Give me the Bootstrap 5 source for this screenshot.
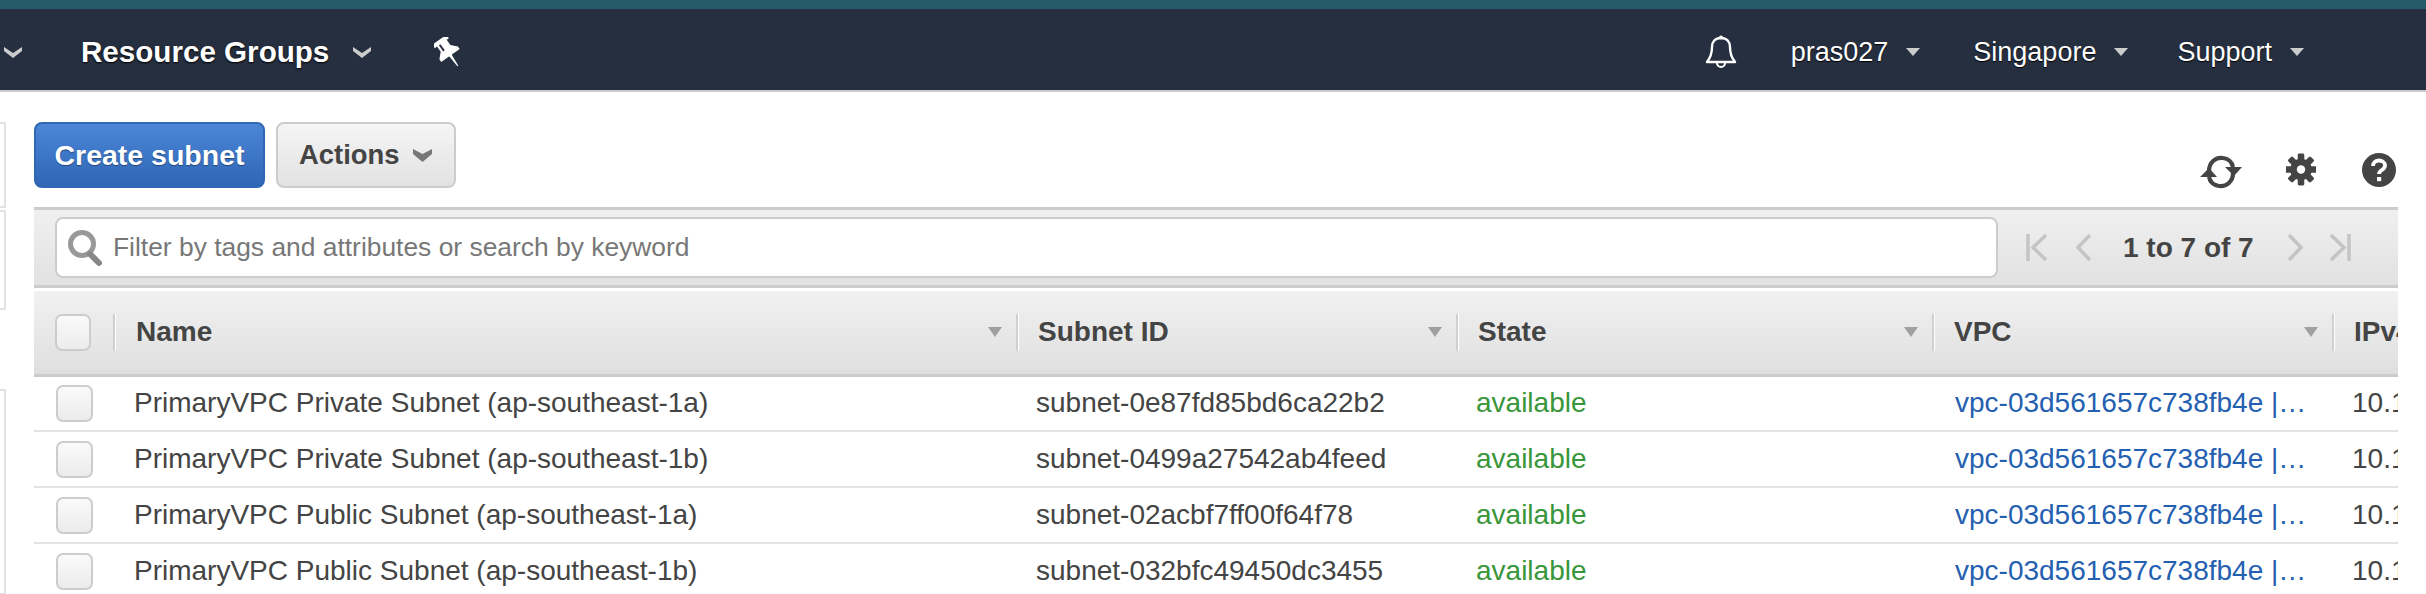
<!DOCTYPE html>
<html lang="en">
<head>
  <meta charset="UTF-8" />
  <meta name="viewport" content="width=device-width, initial-scale=1" />
  <title>Subnets</title>
  <link href="https://cdn.jsdelivr.net/npm/bootstrap@5.3.3/dist/css/bootstrap.min.css" rel="stylesheet" />
  <style>
    html, body {
      height: 594px;
      overflow: hidden;
    }

    body {
      font-family: "Liberation Sans", Arial, sans-serif;
      font-size: 28px;
      color: #444;
      background: #fff;
    }

    /* top bars */
    .top-strip {
      height: 9px;
      background: #265b6b;
    }

    .top-bar {
      height: 83px;
      padding: 4px 0 0;
      background: #262f3f;
      border-bottom: 2px solid #ccc;
      color: #fff;
      flex-wrap: nowrap;
      justify-content: flex-start;
    }

    .nav-bold {
      font-size: 29.600px;
      font-weight: 700;
      text-shadow: 0 1px 2px #000;
      margin-left: 59px;
      padding-top: 2px;
    }

    .nav-plain {
      font-size: 27px;
      text-shadow: 0 1px 1px #000;
      padding-top: 2px;
    }

    .nav-caret {
      width: 0;
      height: 0;
      border-left: 7px solid transparent;
      border-right: 7px solid transparent;
      border-top: 8px solid #ccc;
      margin-left: 18px;
    }

    .spacer-auto {
      margin-left: auto;
    }

    /* stub of the collapsed side panel */
    .side-stub {
      width: 34px;
      flex: none;
    }

    .stub-box {
      width: 6px;
      border: 2px solid #e2e2e2;
      border-left: 0;
    }

    .page-main {
      width: 2364px;
      height: 502px;
      overflow: hidden;
      flex: none;
    }

    .tool-row {
      height: 115px;
      padding-top: 30px;
    }

    .btn-create, .btn-actions {
      height: 66px;
      font-weight: 700;
      border-radius: 8px;
      padding: 0 22px 0 21px;
      line-height: 1;
    }

    .btn-create {
      width: 231px;
      padding: 0;
      font-size: 28.500px;
      color: #fff;
      background: linear-gradient(#4c86d6, #2f66b6);
      border: 2px solid #2f67b3;
      text-shadow: 0 1px 1px rgba(0, 0, 0, .4);
    }

    .btn-actions {
      width: 180px;
      margin-left: 11px;
      font-size: 27.400px;
      color: #444;
      background: linear-gradient(#f5f5f5, #e2e2e2);
      border: 2px solid #ccc;
    }

    .tool-icons {
      height: 68px;
      padding-right: 2px;
    }

    /* filter band */
    .filter-band {
      height: 81px;
      padding: 0 0 0 21px;
      background: linear-gradient(#f0f0f0, #e1e1e1);
      border-top: 3px solid #ccc;
      border-bottom: 3px solid #ccc;
    }

    .filter-box {
      width: 1943px;
      height: 61px;
      background: #fff;
      border: 2px solid #ccc;
      border-radius: 8px;
      padding-left: 10px;
      font-size: 26.400px;
      color: #777;
      flex: none;
    }

    .filter-text {
      margin-left: 10px;
    }

    .pager-count {
      font-weight: 700;
      color: #444;
      white-space: nowrap;
    }

    /* subnet table */
    .table-clip {
      margin-top: 3px;
      overflow: hidden;
    }

    .subnet-table {
      table-layout: fixed;
      width: 2598px;
      margin: 0;
      color: #444;
    }

    .subnet-table th {
      height: 84px;
      padding: 0;
      background: linear-gradient(#f1f1f1, #dfdfdf);
      border-bottom: 3px solid #ccc;
      font-weight: 700;
      vertical-align: middle;
    }

    .subnet-table td {
      height: 56px;
      padding: 0 22px 0 20px;
      border-bottom: 2px solid #e4e4e4;
      font-weight: 400;
      vertical-align: middle;
      white-space: nowrap;
      overflow: hidden;
    }

    .subnet-table td.check-cell {
      padding: 0 0 0 22px;
    }

    .subnet-table td.name-cell {
      padding-left: 21px;
    }

    .subnet-table td.vpc-cell {
      padding: 0 24px 0 23px;
    }

    .head-cell {
      height: 37px;
      padding: 0 14px 0 20px;
      border-left: 2px solid #d0d0d0;
      box-shadow: inset 1px 0 0 #fff;
    }

    .head-cell.head-name {
      padding-left: 21px;
    }

    .sort-tri {
      width: 0;
      height: 0;
      border-left: 7px solid transparent;
      border-right: 7px solid transparent;
      border-top: 10px solid #a0a0a0;
    }

    .row-check {
      width: 37px;
      height: 37px;
      margin: 0;
      float: none;
      background-image: linear-gradient(#fafafa, #ececec);
      border: 2px solid #ccc;
      border-radius: 8px;
    }

    .head-check {
      margin-left: 21px;
      width: 36px;
    }

    .state-ok {
      color: #3a963a;
    }

    .vpc-link {
      color: #2560b0;
      text-decoration: none;
    }
  </style>
</head>
<body>

  <div class="top-strip"></div>
  <nav class="navbar top-bar">
    <svg width="18" height="12" viewBox="0 0 18 12" class="ms-1" aria-hidden="true"><path d="M0 1l9 6 9-6v4l-9 7-9-7z" fill="#ccc"/></svg>
    <span class="nav-bold">Resource Groups</span>
    <svg width="18" height="12" viewBox="0 0 18 12" class="ms-4" aria-hidden="true"><path d="M0 1l9 6 9-6v4l-9 7-9-7z" fill="#ccc"/></svg>
    <svg width="28" height="30" viewBox="0 0 26 28" style="margin-left:63px" aria-hidden="true">
      <g transform="rotate(-35 13 14)">
        <path d="M5 0h16v4h-2.500v6l5 5v3H2.500v-3l5-5V4H5z" fill="#fff"/>
        <path d="M11.500 17h3L13.500 30h-1z" fill="#fff"/>
        <path d="M10.500 4v7" stroke="#262f3f" stroke-width="1.800"/>
      </g>
    </svg>

    <svg width="32" height="34" viewBox="0 0 32 34" class="spacer-auto" aria-hidden="true">
      <path d="M16 3c-6 0-9 4-9 9 0 6-1 10-5 15h28c-4-5-5-9-5-15 0-5-3-9-9-9z" fill="none" stroke="#fff" stroke-width="2.400" stroke-linejoin="round"/>
      <circle cx="16" cy="2.500" r="2" fill="#fff"/>
      <path d="M12 28a4 4 0 0 0 8 0" fill="none" stroke="#fff" stroke-width="2"/>
    </svg>
    <span class="nav-plain" style="margin-left:54px">pras027</span><span class="nav-caret"></span>
    <span class="nav-plain" style="margin-left:53px">Singapore</span><span class="nav-caret"></span>
    <span class="nav-plain" style="margin-left:49px">Support</span><span class="nav-caret" style="margin-right:122px"></span>
  </nav>

  <div class="d-flex">
    <aside class="side-stub">
      <div class="stub-box" style="height:86px;margin-top:30px"></div>
      <div class="stub-box" style="height:100px;margin-top:2px"></div>
      <div class="stub-box" style="height:206px;margin-top:79px"></div>
    </aside>

    <main class="page-main">
      <div class="tool-row d-flex justify-content-between">
        <div class="d-flex">
          <button type="button" class="btn btn-create">Create subnet</button>
          <button type="button" class="btn btn-actions d-flex align-items-center justify-content-between">
            Actions
            <svg width="19" height="13" viewBox="0 0 19 13" aria-hidden="true"><path d="M0 0l9.500 5 9.500-5v5l-9.500 8-9.500-8z" fill="#777"/></svg>
          </button>
        </div>
        <div class="tool-icons d-flex align-items-end">
          <!-- refresh -->
          <svg width="42" height="36" viewBox="0 0 42 36" aria-hidden="true">
            <path d="M9 17C9 8 16 3 23 4c5 .6 9 4 10 9" fill="none" stroke="#444" stroke-width="4.200"/>
            <path d="M33 19c0 9-7 14-14 13-5-.6-9-4-10-9" fill="none" stroke="#444" stroke-width="4.200"/>
            <path d="M25 13h17l-8 9zM0 23h17L9 14z" fill="#444"/>
          </svg>
          <!-- gear -->
          <svg width="30" height="33" viewBox="0 0 32 34" style="margin-left:44px;margin-bottom:4px" aria-hidden="true">
            <g fill="#444" transform="translate(16 17)">
              <circle r="11.500"/>
              <rect x="-3.500" y="-17" width="7" height="34" rx="1.500"/>
              <rect x="-3.500" y="-17" width="7" height="34" rx="1.500" transform="rotate(45)"/>
              <rect x="-3.500" y="-17" width="7" height="34" rx="1.500" transform="rotate(90)"/>
              <rect x="-3.500" y="-17" width="7" height="34" rx="1.500" transform="rotate(135)"/>
            </g>
            <circle cx="16" cy="17" r="4.500" fill="#fff"/>
          </svg>
          <!-- help -->
          <svg width="34" height="34" viewBox="0 0 34 34" style="margin-left:46px;margin-bottom:3px" aria-hidden="true">
            <circle cx="17" cy="17" r="17" fill="#444"/>
            <path d="M11 13c0-3.500 2.700-5.500 6-5.500s6 2 6 5c0 4.500-6 4.500-6 8.500" fill="none" stroke="#fff" stroke-width="3.800"/>
            <rect x="15" y="24" width="4.200" height="4.200" fill="#fff"/>
          </svg>
        </div>
      </div>

      <div class="filter-band d-flex align-items-center">
        <div class="filter-box d-flex align-items-center">
          <svg width="36" height="38" viewBox="0 0 36 38" class="flex-shrink-0" aria-hidden="true">
            <circle cx="15" cy="15" r="11.500" fill="none" stroke="#999" stroke-width="5"/>
            <path d="M23 25l9 9" stroke="#888" stroke-width="6" stroke-linecap="round"/>
          </svg>
          <span class="filter-text">Filter by tags and attributes or search by keyword</span>
        </div>
        <svg width="21" height="27" viewBox="0 0 21 27" style="margin-left:28px" aria-hidden="true"><path d="M2 0v27M20 1L7 13.500 20 26" fill="none" stroke="#c4c4c4" stroke-width="3.500"/></svg>
        <svg width="15" height="27" viewBox="0 0 15 27" style="margin-left:29px" aria-hidden="true"><path d="M14 1L2 13.500 14 26" fill="none" stroke="#c4c4c4" stroke-width="3.500"/></svg>
        <span class="pager-count" style="margin-left:32px">1 to 7 of 7</span>
        <svg width="15" height="27" viewBox="0 0 15 27" style="margin-left:34px" aria-hidden="true"><path d="M1 1l12 12.500L1 26" fill="none" stroke="#c4c4c4" stroke-width="3.500"/></svg>
        <svg width="21" height="27" viewBox="0 0 21 27" style="margin-left:27px" aria-hidden="true"><path d="M19 0v27M1 1l13 12.500L1 26" fill="none" stroke="#c4c4c4" stroke-width="3.500"/></svg>
      </div>

      <div class="table-clip">
        <table class="table subnet-table">
          <colgroup>
            <col style="width:79px" /><col style="width:903px" /><col style="width:440px" />
            <col style="width:476px" /><col style="width:400px" /><col style="width:300px" />
          </colgroup>
          <thead>
            <tr>
              <th><input class="form-check-input row-check head-check d-block" type="checkbox" aria-label="Select all" /></th>
              <th><div class="head-cell head-name d-flex align-items-center justify-content-between"><span>Name</span><span class="sort-tri"></span></div></th>
              <th><div class="head-cell d-flex align-items-center justify-content-between"><span>Subnet ID</span><span class="sort-tri"></span></div></th>
              <th><div class="head-cell d-flex align-items-center justify-content-between"><span>State</span><span class="sort-tri"></span></div></th>
              <th><div class="head-cell d-flex align-items-center justify-content-between"><span>VPC</span><span class="sort-tri"></span></div></th>
              <th><div class="head-cell d-flex align-items-center justify-content-between"><span>IPv4 CIDR</span><span class="sort-tri"></span></div></th>
            </tr>
          </thead>
          <tbody id="subnetRows"></tbody>
        </table>
      </div>
    </main>
  </div>

  <script>
    const subnets = [
      ['PrimaryVPC Private Subnet (ap-southeast-1a)', 'subnet-0e87fd85bd6ca22b2', '10.192.20.0/24'],
      ['PrimaryVPC Private Subnet (ap-southeast-1b)', 'subnet-0499a27542ab4feed', '10.192.21.0/24'],
      ['PrimaryVPC Public Subnet (ap-southeast-1a)', 'subnet-02acbf7ff00f64f78', '10.192.10.0/24'],
      ['PrimaryVPC Public Subnet (ap-southeast-1b)', 'subnet-032bfc49450dc3455', '10.192.11.0/24']
    ];

    document.getElementById('subnetRows').innerHTML = subnets.map(s => `
      <tr>
        <td class="check-cell"><input class="form-check-input row-check d-block" type="checkbox" aria-label="Select row" /></td>
        <td class="name-cell">${s[0]}</td>
        <td>${s[1]}</td>
        <td class="state-ok">available</td>
        <td class="vpc-cell"><a class="vpc-link d-block text-truncate" href="#">vpc-03d561657c738fb4e | PrimaryVPC</a></td>
        <td>${s[2]}</td>
      </tr>`).join('');
  </script>

  <script src="https://cdn.jsdelivr.net/npm/bootstrap@5.3.3/dist/js/bootstrap.bundle.min.js"></script>
</body>
</html>
